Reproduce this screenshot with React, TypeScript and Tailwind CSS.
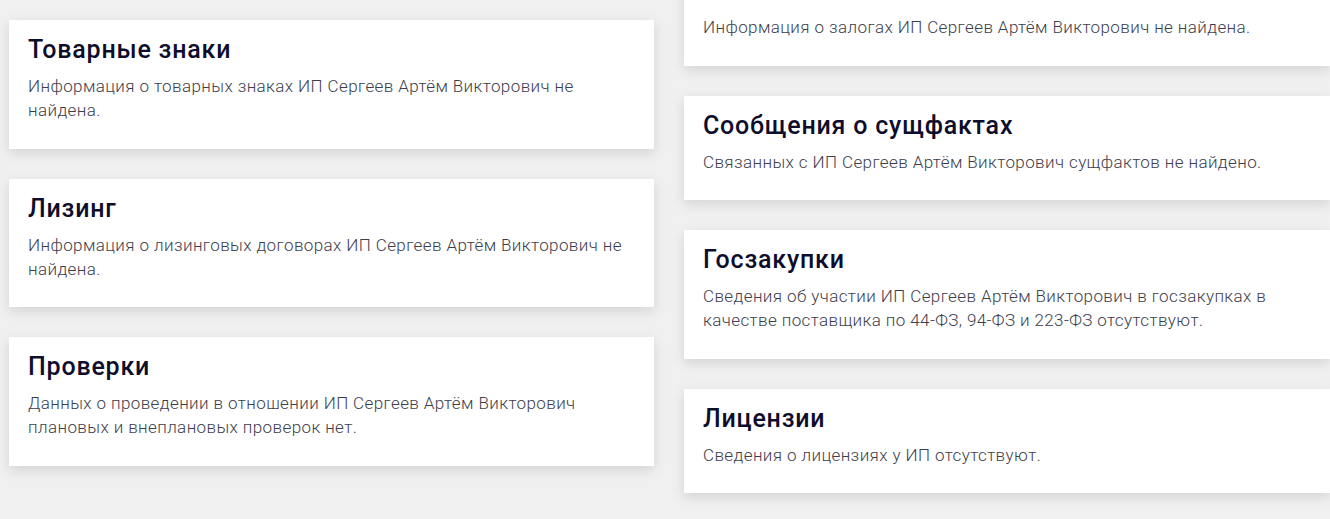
import React from "react";

type Card = { title: string; text: string };

const left: Card[] = [
  {
    title: "Товарные знаки",
    text: "Информация о товарных знаках ИП Сергеев Артём Викторович не найдена.",
  },
  {
    title: "Лизинг",
    text: "Информация о лизинговых договорах ИП Сергеев Артём Викторович не найдена.",
  },
  {
    title: "Проверки",
    text: "Данных о проведении в отношении ИП Сергеев Артём Викторович плановых и внеплановых проверок нет.",
  },
];

const right: Card[] = [
  {
    title: "Залоги",
    text: "Информация о залогах ИП Сергеев Артём Викторович не найдена.",
  },
  {
    title: "Сообщения о сущфактах",
    text: "Связанных с ИП Сергеев Артём Викторович сущфактов не найдено.",
  },
  {
    title: "Госзакупки",
    text: "Сведения об участии ИП Сергеев Артём Викторович в госзакупках в качестве поставщика по 44-ФЗ, 94-ФЗ и 223-ФЗ отсутствуют.",
  },
  {
    title: "Лицензии",
    text: "Сведения о лицензиях у ИП отсутствуют.",
  },
];

function InfoCard({ title, text }: Card) {
  return (
    <div className="bg-white pl-[19px] pr-[20px] pt-[16px] pb-[26.5px] shadow-[0_4px_12px_rgba(0,0,0,0.12)]">
      <h3 className="text-[25px] leading-[28px] font-medium text-[#0e0d2c] tracking-[0.8px]">
        {title}
      </h3>
      <p className="mt-[10px] text-[17px] leading-[24px] font-light text-[#3d3d4c] tracking-[0.4px]">
        {text}
      </p>
    </div>
  );
}

export default function App() {
  return (
    <div
      className="w-[1330px] h-[519px] overflow-hidden bg-[#f0f0f0] flex gap-[30px] pl-[9px]"
      style={{ fontFamily: "Roboto, 'Noto Sans', sans-serif" }}
    >
      <div className="w-[645px] shrink-0 flex flex-col gap-[30px] pt-[20px]">
        {left.map((c) => (
          <InfoCard key={c.title} {...c} />
        ))}
      </div>
      <div className="w-[646px] shrink-0 flex flex-col gap-[30px] mt-[-39px]">
        {right.map((c) => (
          <InfoCard key={c.title} {...c} />
        ))}
      </div>
    </div>
  );
}
